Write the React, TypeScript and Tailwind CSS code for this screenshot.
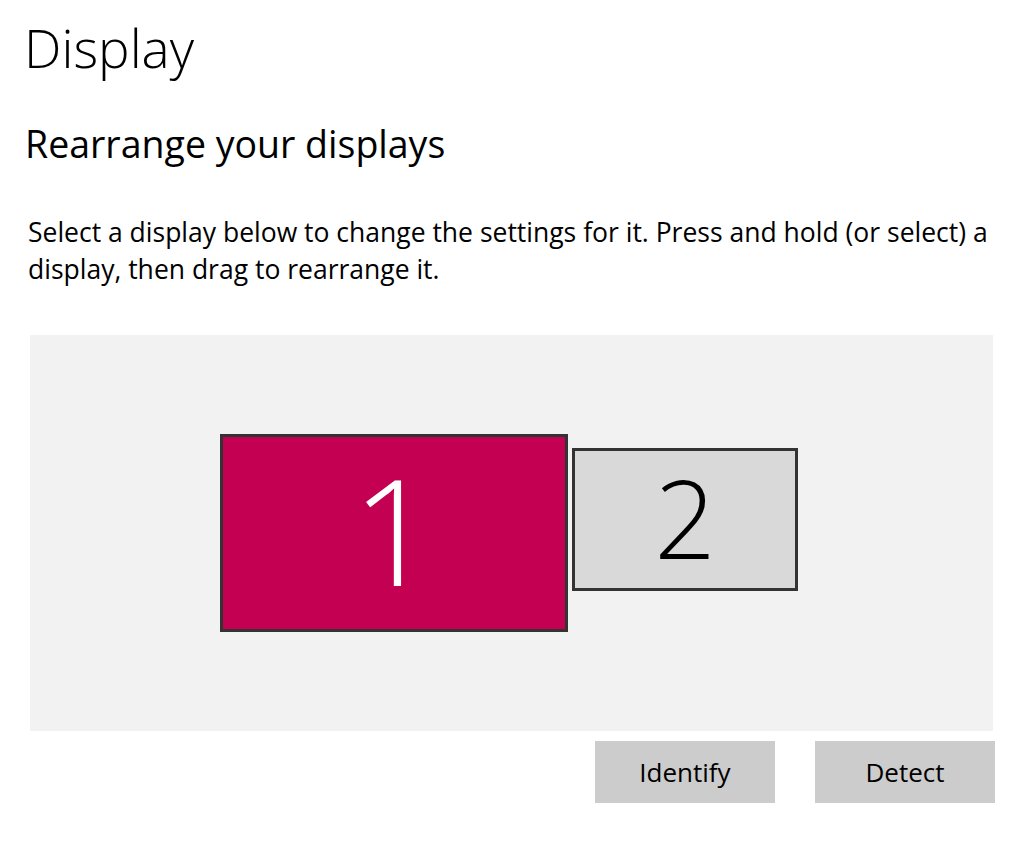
export default function App() {
  return (
    <div className="min-h-screen w-[1026px] bg-white text-black font-['Open_Sans',sans-serif] flex flex-col">
      <h1 className="ml-[24px] mt-[13px] text-[53px] leading-[70px] font-light">Display</h1>
      <h2 className="ml-[25px] mt-[36px] text-[37.5px] leading-[50px] font-normal">Rearrange your displays</h2>
      <p className="ml-[28px] mt-[45px] w-[975px] text-[26.5px] leading-[37px]">
        Select a display below to change the settings for it. Press and hold (or select) a display, then drag to rearrange it.
      </p>
      <div className="ml-[30px] mt-[47px] w-[963px] h-[396px] bg-[#f2f2f2] flex items-center justify-center pr-[5px]">
        <div className="flex items-start gap-[4px]">
          <div className="w-[348px] h-[198px] border-[3px] border-[#333333] bg-[#c30052] flex items-center justify-center pb-[8px]">
            <span className="text-white text-[148px] leading-none font-light">1</span>
          </div>
          <div className="mt-[14px] w-[226px] h-[143px] border-[3px] border-[#333333] bg-[#d9d9d9] flex items-center justify-center pb-[4px]">
            <span className="text-black text-[108px] leading-none font-light">2</span>
          </div>
        </div>
      </div>
      <div className="ml-[595px] mt-[10px] flex gap-[40px]">
        <button className="w-[180px] h-[62px] bg-[#cccccc] text-[26px]">Identify</button>
        <button className="w-[180px] h-[62px] bg-[#cccccc] text-[26px]">Detect</button>
      </div>
    </div>
  );
}
